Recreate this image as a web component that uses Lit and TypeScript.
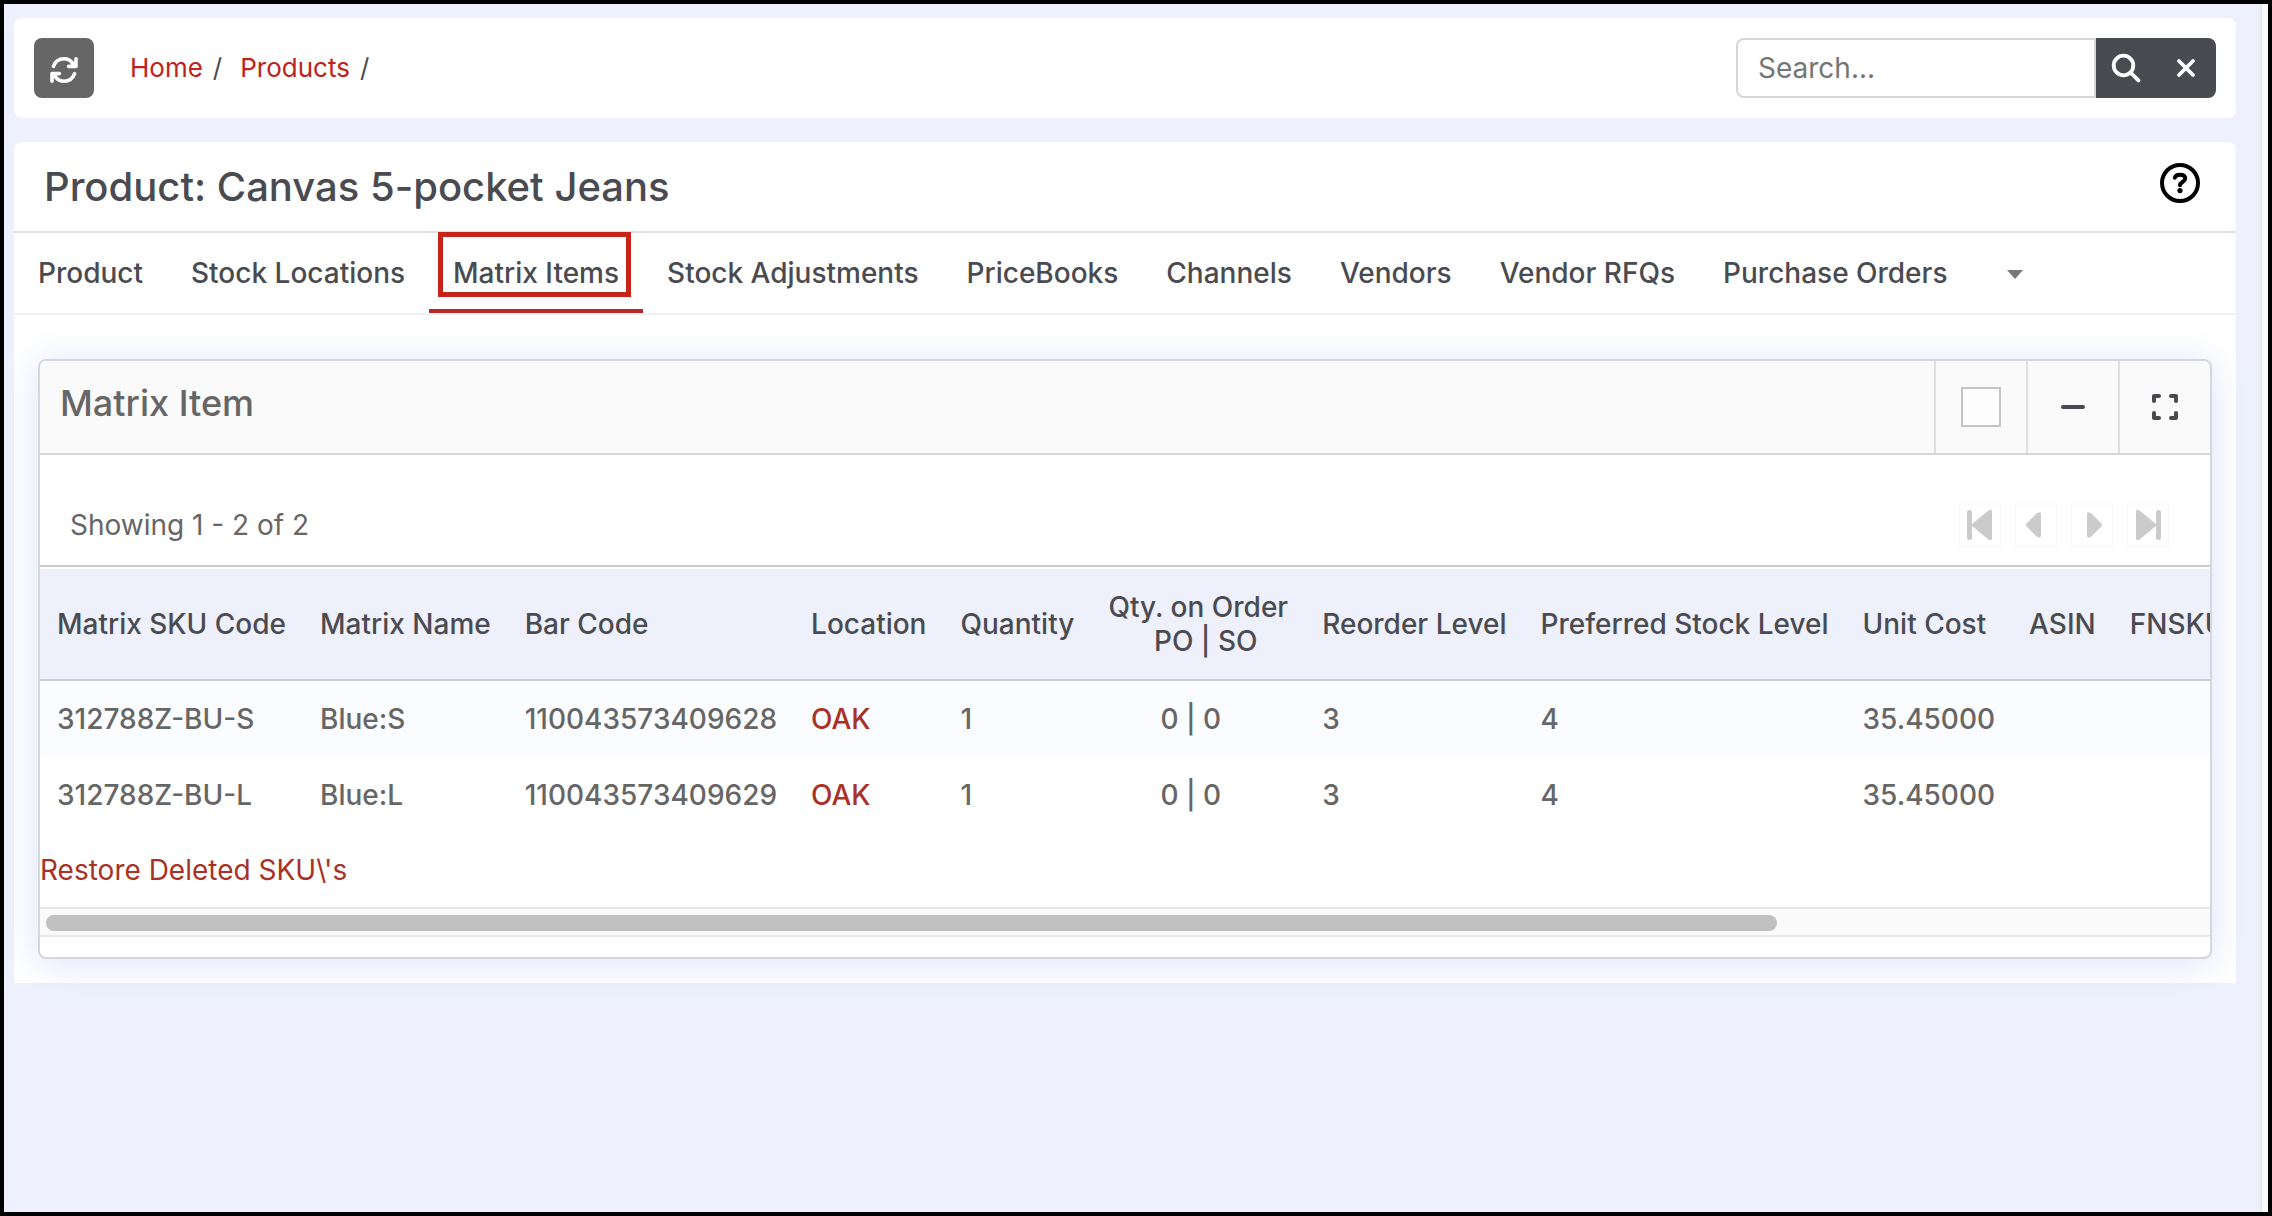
import { LitElement, html, css, svg } from "lit";
import { customElement, state } from "lit/decorators.js";

interface MatrixRow {
  sku: string;
  name: string;
  barCode: string;
  location: string;
  quantity: string;
  onOrder: string;
  reorder: string;
  preferred: string;
  cost: string;
}

const ROWS: MatrixRow[] = [
  { sku: "312788Z-BU-S", name: "Blue:S", barCode: "110043573409628", location: "OAK", quantity: "1", onOrder: "0 | 0", reorder: "3", preferred: "4", cost: "35.45000" },
  { sku: "312788Z-BU-L", name: "Blue:L", barCode: "110043573409629", location: "OAK", quantity: "1", onOrder: "0 | 0", reorder: "3", preferred: "4", cost: "35.45000" },
];

const TABS = ["Product", "Stock Locations", "Matrix Items", "Stock Adjustments", "PriceBooks", "Channels", "Vendors", "Vendor RFQs", "Purchase Orders"];

const barFirst = svg`<rect x="9" y="7" width="5" height="30" rx="2.5"/><path d="M14.6 20.4 30.4 7.4Q34 5.4 34 9V35Q34 38.6 30.4 36.6L14.6 23.6Q12.8 22 14.6 20.4Z"/>`;
const single = svg`<path d="M12.6 20.4 22.6 10.4Q27 7.6 27 11.6V32.4Q27 36.4 22.6 33.6L12.6 23.6Q11 22 12.6 20.4Z"/>`;

@customElement("app-root")
export class AppRoot extends LitElement {
  @state() private active = "Matrix Items";

  static styles = css`
    :host { display: block; font-family: Inter, "Liberation Sans", sans-serif; font-size: 28px; line-height: 34px; color: #4a4b51; }
    * { box-sizing: border-box; }
    button { font: inherit; color: inherit; border: 0; background: none; padding: 0; cursor: pointer; }
    a { text-decoration: none; color: inherit; }
    svg { display: block; }
    .frame { display: flex; min-height: 100vh; border: 4px solid #000; background: #eef1fd; }
    .page { flex: 1; min-width: 0; padding: 14px 24px 14px 10px; display: flex; flex-direction: column; gap: 24px; }
    .gutter { width: 8px; background: #fafafa; border-left: 2px solid #e6e7ea; }
    .topbar { display: flex; align-items: center; height: 100px; padding: 20px; background: #fff; border-radius: 8px; }
    .refresh { width: 60px; height: 60px; padding-top: 4px; border-radius: 8px; background: #666; color: #fff; display: grid; place-items: center; }
    .crumbs { display: flex; gap: 10px; margin-left: 36px; flex: 1; font-size: 26px; }
    .crumbs a { color: #bf2121; }
    .crumbs a + span + a { margin-left: 8px; }
    .search { display: flex; width: 480px; height: 60px; }
    .search input { flex: 1; min-width: 0; font: inherit; color: #4a4b51; padding: 0 20px; border: 2px solid #d6d6d8; border-radius: 8px 0 0 8px; background: #fff; outline: 0; }
    .search input::placeholder { color: #757575; opacity: 1; }
    .search button { width: 60px; background: #4a4b51; color: #fff; display: grid; place-items: center; }
    .search button:last-child { border-radius: 0 8px 8px 0; }
    .panel { background: #fff; border-radius: 8px 8px 0 0; padding-bottom: 24px; }
    .heading { display: flex; align-items: center; justify-content: space-between; height: 91px; padding: 0 36px 0 30px; border-bottom: 2px solid #dfe0e2; }
    h1 { margin: 0; font-size: 40px; line-height: 48px; font-weight: 500; }
    .help { padding-bottom: 8px; color: #000; }
    .tabs { display: flex; height: 82px; border-bottom: 2px solid #f0f1f8; }
    .tab { position: relative; padding: 4px 24px 0; height: 80px; display: flex; align-items: center; font-weight: 500; white-space: nowrap; border-bottom: 4px solid transparent; }
    .tab.active { border-color: #b82a26; }
    .mark { position: absolute; inset: -1px 12px 12px 9px; border: 5px solid #c62419; pointer-events: none; }
    .more { width: 88px; padding-top: 2px; display: grid; place-items: center; color: #777; }
    .card { margin: 44px 24px 0; border: 2px solid #d5d7df; border-radius: 8px; background: #fff; box-shadow: 0 4px 36px rgba(80, 115, 230, 0.2); }
    .card-head { display: flex; justify-content: space-between; background: #fafafa; height: 94px; border-bottom: 2px solid #d6d7d9; border-radius: 6px 6px 0 0; }
    h2 { margin: 0; padding: 20px; font-size: 36px; line-height: 44px; font-weight: 500; color: #666; }
    .tools { display: flex; }
    .tool { width: 92px; border-left: 2px solid #dedfe1; display: grid; place-items: center; }
    .tool input { appearance: none; margin: 0; width: 40px; height: 40px; border: 2px solid #c4c4c4; background: #fdfdfd; }
    .pager { display: flex; align-items: center; justify-content: space-between; margin-top: 30px; height: 82px; padding: 0 40px 0 30px; color: #666; border-bottom: 2px solid #cbccce; }
    .pages { display: flex; gap: 12px; }
    .pages button { width: 44px; height: 44px; border: 2px solid #fafbff; color: #cbcbcb; display: grid; place-items: center; }
    .pages .next { transform: scaleX(-1); }
    .scroller { overflow: hidden; padding-top: 2px; }
    table { border-collapse: separate; border-spacing: 0; min-width: 125%; font-weight: 500; white-space: nowrap; }
    th { height: 112px; padding: 0 17px; text-align: left; font-weight: 500; background: #eef0fc; border-bottom: 2px solid #cbccd2; }
    td { height: 76px; padding: 0 17px; color: #666; }
    tbody tr:first-child td { background: #fbfcff; }
    th.center, td.center { text-align: center; }
    .last { width: 50%; }
    td a, .restore { color: #a93226; }
    .restore { display: inline-block; margin: 20px 0; }
    .bar { height: 30px; padding: 6px 0 6px 6px; background: #fafafa; border: solid #e8e8e8; border-width: 2px 0; margin-bottom: 20px; }
    .thumb { width: 80%; height: 16px; border-radius: 8px; background: #c1c1c1; }
  `;

  private renderRow(r: MatrixRow) {
    return html`<tr>
      <td>${r.sku}</td><td>${r.name}</td><td>${r.barCode}</td>
      <td><a href="#location">${r.location}</a></td><td>${r.quantity}</td>
      <td class="center">${r.onOrder}&nbsp;&nbsp;</td>
      <td>${r.reorder}</td><td>${r.preferred}</td><td>${r.cost}</td><td></td><td></td>
    </tr>`;
  }

  render() {
    return html`<div class="frame">
      <main class="page">
        <header class="topbar">
          <button class="refresh" aria-label="Refresh">
            <svg width="28" height="28" viewBox="0 0 28 28" fill="none" stroke="currentColor" stroke-width="3.6" stroke-linecap="round" stroke-linejoin="round"><path d="M3.400 10.400C5.200 5.600 9 2.800 14 2.800c4 0 6.800 1.800 8.800 4.600M26 2.800v7.600h-7.400"/><path d="m26 5.500-5.200 4.900H26z" fill="currentColor" stroke-width="1"/><path d="M24.600 17.600c-1.800 4.800-5.600 7.600-10.600 7.600-4 0-6.800-1.800-8.800-4.600M2 25.200v-7.600h7.400"/><path d="m2 22.500 5.200-4.900H2z" fill="currentColor" stroke-width="1"/></svg>
          </button>
          <nav class="crumbs" aria-label="Breadcrumb"><a href="#home">Home</a><span>/</span><a href="#products">Products</a><span>/</span></nav>
          <form class="search" role="search" @submit=${(e: Event) => e.preventDefault()}>
            <input type="text" aria-label="Search" placeholder="Search..." />
            <button type="submit" aria-label="Search"><svg width="30" height="30" viewBox="0 0 30 30" fill="none" stroke="currentColor" stroke-width="3.800" stroke-linecap="round"><circle cx="12.500" cy="12.500" r="9.800"/><path d="m19.600 19.600 7.800 7.800"/></svg></button>
            <button type="reset" aria-label="Clear"><svg width="20" height="20" viewBox="0 0 20 20" stroke="currentColor" stroke-width="3.800" stroke-linecap="round"><path d="m3 3 14 14m0-14-14 14"/></svg></button>
          </form>
        </header>
        <section class="panel">
          <div class="heading">
            <h1>Product: Canvas 5-pocket Jeans</h1>
            <button class="help" aria-label="Help"><svg width="40" height="40" viewBox="0 0 40 40" fill="none" stroke="currentColor" stroke-width="4"><circle cx="20" cy="20" r="18"/><path d="M14.800 14.800c.6-2 2.400-3 5.200-3 3.300 0 5.200 1.400 5.200 3.700 0 3.300-5.200 3.600-5.200 6.700" stroke-linecap="round"/><circle cx="20" cy="27.600" r="2.600" fill="currentColor" stroke="none"/></svg></button>
          </div>
          <nav class="tabs" aria-label="Product sections">
            ${TABS.map((t) => html`<a class="tab ${t === this.active ? "active" : ""}" href="#${t.toLowerCase().replace(" ", "-")}" @click=${() => (this.active = t)}>${t}${t === this.active ? html`<span class="mark"></span>` : ""}</a>`)}
            <button class="more" aria-label="More tabs"><svg width="16" height="9" viewBox="0 0 16 9"><path fill="currentColor" d="M0 0h16L8 9z"/></svg></button>
          </nav>
          <section class="card">
            <div class="card-head">
              <h2>Matrix Item</h2>
              <div class="tools">
                <label class="tool"><input type="checkbox" aria-label="Select panel" /></label>
                <button class="tool" aria-label="Collapse"><svg width="24" height="4" viewBox="0 0 24 4"><rect width="24" height="4" rx="2" fill="currentColor"/></svg></button>
                <button class="tool" aria-label="Full screen"><svg width="26" height="26" viewBox="0 0 26 26" fill="none" stroke="currentColor" stroke-width="4" stroke-linecap="round" stroke-linejoin="round"><path d="M2 7V2h5M19 2h5v5M24 19v5h-5M7 24H2v-5"/></svg></button>
              </div>
            </div>
            <div class="pager">
              <span>Showing 1 - 2 of 2</span>
              <div class="pages">
                <button aria-label="First page"><svg width="40" height="40" viewBox="2 2 40 40" fill="currentColor">${barFirst}</svg></button>
                <button aria-label="Previous page"><svg width="40" height="40" viewBox="2 2 40 40" fill="currentColor">${single}</svg></button>
                <button class="next" aria-label="Next page"><svg width="40" height="40" viewBox="2 2 40 40" fill="currentColor">${single}</svg></button>
                <button class="next" aria-label="Last page"><svg width="40" height="40" viewBox="2 2 40 40" fill="currentColor">${barFirst}</svg></button>
              </div>
            </div>
            <div class="scroller">
              <table>
                <thead><tr>
                  <th>Matrix SKU Code</th><th>Matrix Name</th><th>Bar Code</th><th>Location</th><th>Quantity</th>
                  <th class="center">Qty. on Order<br />&nbsp;&nbsp;PO | SO</th>
                  <th>Reorder Level</th><th>Preferred Stock Level</th><th>Unit Cost</th><th>ASIN</th><th class="last">FNSKU</th>
                </tr></thead>
                <tbody>${ROWS.map((r) => this.renderRow(r))}</tbody>
              </table>
              <a class="restore" href="#restore">Restore Deleted SKU\\'s</a>
            </div>
            <div class="bar"><div class="thumb"></div></div>
          </section>
        </section>
      </main>
      <div class="gutter"></div>
    </div>`;
  }
}
